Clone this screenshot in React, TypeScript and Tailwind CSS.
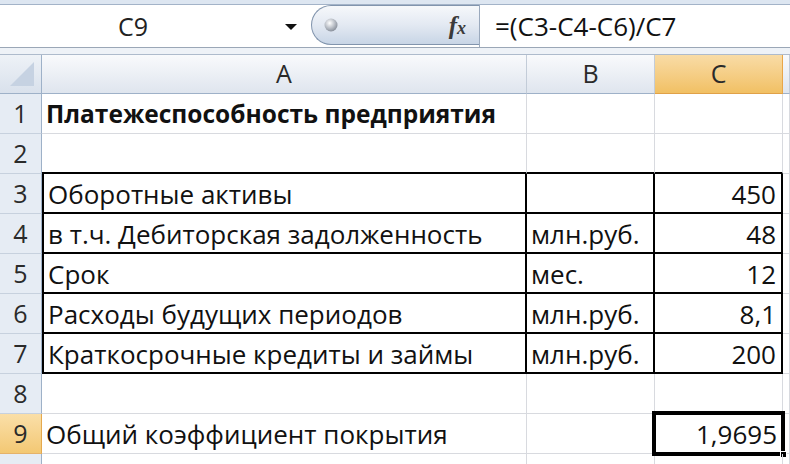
import React from 'react';

type Row = {
  n: number;
  a?: string;
  b?: string;
  c?: string;
  bold?: boolean;
  boxed?: boolean;
  topEdge?: boolean;
  selected?: boolean;
  hidden?: boolean;
};

const rows: Row[] = [
  { n: 1, a: 'Платежеспособность предприятия', bold: true },
  { n: 2, topEdge: true },
  { n: 3, a: 'Оборотные активы', c: '450', boxed: true },
  { n: 4, a: 'в т.ч. Дебиторская задолженность', b: 'млн.руб.', c: '48', boxed: true },
  { n: 5, a: 'Срок', b: 'мес.', c: '12', boxed: true },
  { n: 6, a: 'Расходы будущих периодов', b: 'млн.руб.', c: '8,1', boxed: true },
  { n: 7, a: 'Краткосрочные кредиты и займы', b: 'млн.руб.', c: '200', boxed: true },
  { n: 8 },
  { n: 9, a: 'Общий коэффициент покрытия', c: '1,9695', selected: true },
  // row 10 only peeks in at the bottom edge
  { n: 10, hidden: true },
];

const font = { fontFamily: '"Open Sans", "Noto Sans", sans-serif' };

function FormulaBar() {
  return (
    <div className="flex h-[55px] flex-col">
      <div className="h-[5px] border-b border-[#a3b3c8] bg-[#dde6f1]" />
      <div className="flex h-[42px] bg-white">
        <div className="flex w-[300px] items-center">
          <span className="w-[266px] pt-[1px] text-center text-[25px] text-[#222]">C9</span>
          <svg width="14" height="8" viewBox="0 0 14 8" className="ml-[18px] mt-[2px]">
            <path d="M1 1 L13 1 L7 7 Z" fill="#111" />
          </svg>
        </div>
        <div className="ml-[11px] flex h-[40px] w-[168px] items-center rounded-l-full border border-r-0 border-[#8194ad] bg-gradient-to-b from-[#f6f8fb] via-[#e3e9f2] to-[#c8d5e6]">
          <svg width="20" height="20" viewBox="0 0 20 20" className="ml-[9px]">
            <defs>
              <radialGradient id="grip" cx="40%" cy="35%" r="65%">
                <stop offset="0%" stopColor="#ffffff" />
                <stop offset="60%" stopColor="#b9bec6" />
                <stop offset="100%" stopColor="#8a919c" />
              </radialGradient>
            </defs>
            <circle cx="10" cy="10" r="6.5" fill="url(#grip)" />
          </svg>
          <span
            className="ml-auto mr-[13px] text-[25px] font-bold italic leading-none text-[#3a3a3a]"
            style={{ fontFamily: '"Liberation Serif", serif' }}
          >
            f<span className="text-[18px]">x</span>
          </span>
        </div>
        <div className="flex flex-1 items-center border-l border-[#9aa9bd] pl-[15px]">
          <span className="pt-[1px] text-[26px] text-[#111]">=(C3-C4-C6)/C7</span>
        </div>
      </div>
      <div className="h-[8px] border-t border-b border-t-[#9ba7b7] border-b-[#aebbcc] bg-[#eef2f7]" />
    </div>
  );
}

function HeaderRow() {
  const hdr =
    'flex items-center justify-center border-r border-b border-r-[#c3ccd8] border-b-[#9eb1c8] bg-gradient-to-b from-[#f9fafc] to-[#dfe5ee] text-[25px] text-[#2a2a2a]';
  return (
    <>
      <div className="relative border-r border-b border-[#9eb1c8] bg-gradient-to-b from-[#eef2f7] to-[#d9e1ec]">
        <svg width="26" height="26" viewBox="0 0 26 26" className="absolute right-[6px] bottom-[6px]">
          <path d="M25 1 L25 25 L1 25 Z" fill="#c6d2e2" />
        </svg>
      </div>
      <div className={hdr}>A</div>
      <div className={hdr}>B</div>
      <div className="flex items-center justify-center border-r border-b border-r-[#e9a648] border-b-[#e0a148] bg-gradient-to-b from-[#f9dca6] to-[#f1c063] text-[25px] text-[#2a2a2a]">
        C
      </div>
      <div className={hdr} />
    </>
  );
}

function DataRow({ r }: { r: Row }) {
  const grid = 'border-r border-b border-[#d8dadf]';
  const edge = 'border-r border-b-2 border-r-[#d8dadf] border-b-black';
  const boxA = r.boxed ? 'border-l-2 border-r-2 border-b-2 border-black' : r.topEdge ? edge : grid;
  const boxBC = r.boxed ? 'border-r-2 border-b-2 border-black' : r.topEdge ? edge : grid;
  return (
    <>
      <div
        className={`flex items-center justify-center border-r border-b pt-[1px] text-[25px] text-[#2a2a2a] ${
          r.selected
            ? 'border-r-[#e5a94e] border-b-[#e5b26a] bg-gradient-to-b from-[#fadfa8] to-[#f3c873]'
            : 'border-r-[#9eb1c8] border-b-[#c7d1de] bg-[#e6ecf4]'
        }`}
      >
        {r.hidden ? null : r.n}
      </div>
      <div
        className={`flex items-center whitespace-nowrap pl-[4px] pt-[2px] text-[#111] ${boxA} ${
          r.bold ? 'text-[24.5px] font-bold' : 'text-[26px]'
        }`}
      >
        {r.a}
      </div>
      <div className={`flex items-center whitespace-nowrap pl-[4px] pt-[2px] text-[26px] text-[#111] ${boxBC}`}>{r.b}</div>
      <div className={`relative flex items-center justify-end whitespace-nowrap pr-[5px] pt-[2px] text-[26px] text-[#111] ${boxBC}`}>
        {r.c}
        {r.selected && (
          <div className="absolute -top-[3px] -left-[3px] -right-[3px] -bottom-[3px] border-[4px] border-black">
            <div className="absolute -right-[6px] -bottom-[6px] h-[7px] w-[7px] border border-white bg-black" />
          </div>
        )}
      </div>
      <div className={grid} />
    </>
  );
}

export default function App() {
  return (
    <div className="h-[464px] w-[790px] overflow-hidden bg-white" style={font}>
      <FormulaBar />
      <div className="grid grid-cols-[42px_485px_128px_128px_1fr] grid-rows-[39px_repeat(10,40px)]">
        <HeaderRow />
        {rows.map((r) => (
          <DataRow key={r.n} r={r} />
        ))}
      </div>
    </div>
  );
}
